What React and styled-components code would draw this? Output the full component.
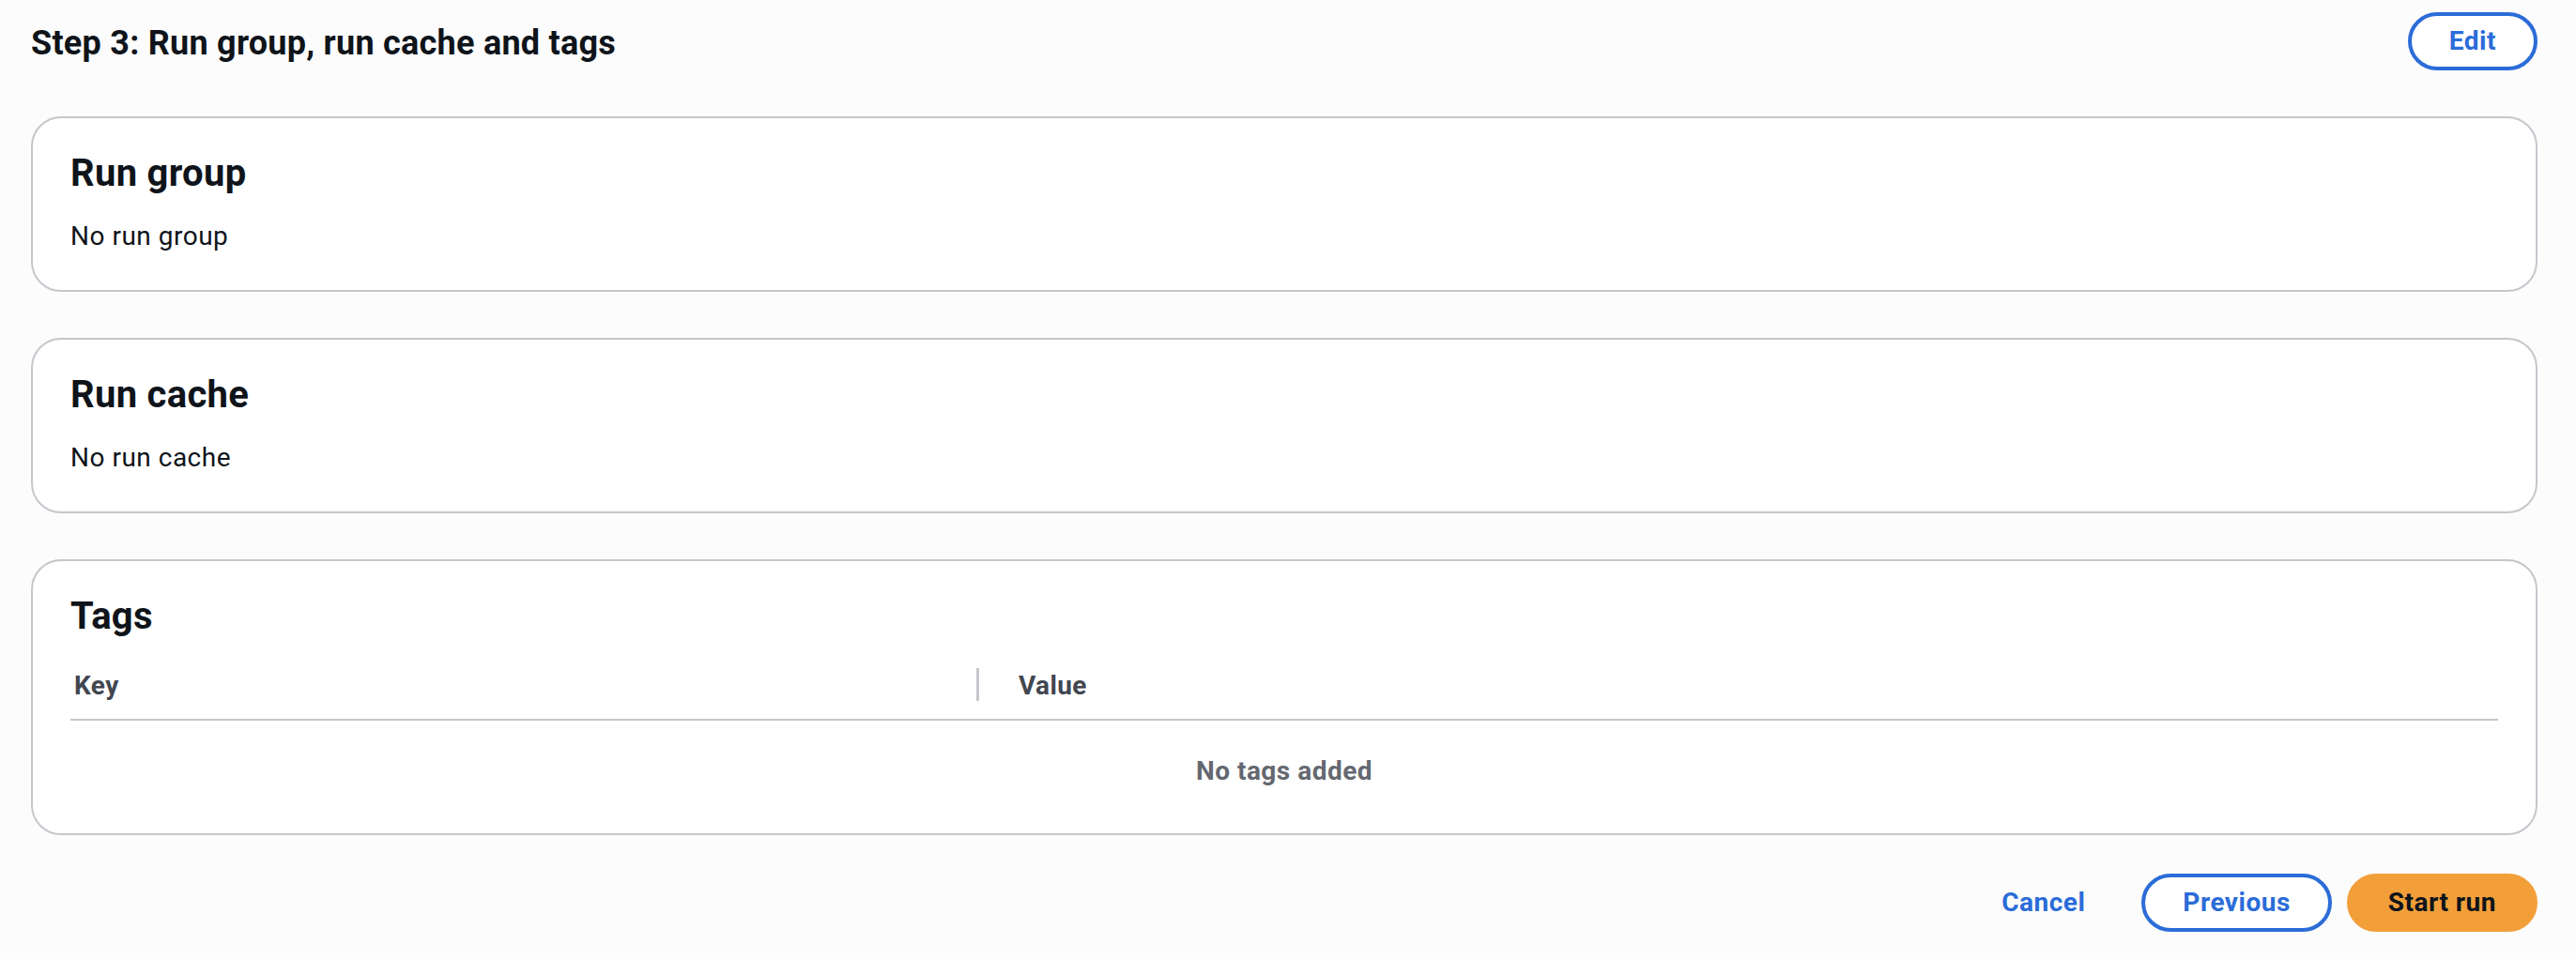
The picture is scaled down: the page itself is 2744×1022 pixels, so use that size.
import React from 'react';
import styled, { createGlobalStyle } from 'styled-components';

const GlobalStyle = createGlobalStyle`
  html, body {
    margin: 0;
    padding: 0;
    background-color: #fcfcfc;
  }

  body {
    font-family: Roboto, "Liberation Sans", sans-serif;
    color: #0f141a;
  }

  * {
    box-sizing: border-box;
  }
`;

const Page = styled.div`
  min-height: 1022px;
  padding: 13px 41px 0 33px;
  display: flex;
  flex-direction: column;
  gap: 49px;
`;

const StepHeader = styled.div`
  display: flex;
  justify-content: space-between;
  align-items: center;
  height: 62px;
`;

const StepTitle = styled.h2`
  margin: 0;
  padding-top: 4px;
  font-size: 36px;
  line-height: 44px;
  font-weight: 700;
  letter-spacing: 0.25px;
  color: #0f141a;
`;

const Button = styled.button`
  height: 62px;
  padding: 0 40px;
  border-radius: 40px;
  border: 4px solid ${(p) => (p.$variant === 'primary' ? '#f29f3a' : p.$variant === 'link' ? 'transparent' : '#2b6cd8')};
  background-color: ${(p) => (p.$variant === 'primary' ? '#f29f3a' : p.$variant === 'link' ? 'transparent' : '#ffffff')};
  color: ${(p) => (p.$variant === 'primary' ? '#0f141a' : '#2b6cd8')};
  font-family: Roboto, "Liberation Sans", sans-serif;
  font-size: 28px;
  font-weight: 700;
  letter-spacing: 0.5px;
  line-height: 40px;
  cursor: pointer;
`;

const Sections = styled.div`
  display: flex;
  flex-direction: column;
  gap: 49px;
`;

const Container = styled.section`
  background-color: #ffffff;
  border: 2px solid #c6c6cd;
  border-radius: 32px;
  padding: 35px 40px ${(p) => p.$bottom || 37}px;
`;

const ContainerTitle = styled.h3`
  margin: 0;
  font-size: 40px;
  line-height: 48px;
  font-weight: 700;
  letter-spacing: 0.3px;
  color: #0f141a;
`;

const BodyText = styled.p`
  margin: 23px 0 0;
  font-size: 28px;
  line-height: 40px;
  letter-spacing: 0.5px;
  color: #0f141a;
`;

const Table = styled.div`
  margin-top: 15px;
`;

const HeaderRow = styled.div`
  display: grid;
  grid-template-columns: 965px 1fr;
  border-bottom: 2px solid #c6c6cd;
  padding: 15px 0 15px;
`;

const HeaderCell = styled.div`
  position: relative;
  padding-left: ${(p) => (p.$divider ? 45 : 4)}px;
  font-size: 28px;
  line-height: 40px;
  font-weight: 700;
  letter-spacing: 0.4px;
  color: #424650;

  ${(p) =>
    p.$divider &&
    `
    &::before {
      content: '';
      position: absolute;
      left: 0;
      top: 1px;
      width: 3px;
      height: 35px;
      background-color: #c6c6cd;
    }
  `}
`;

const EmptyRow = styled.div`
  padding-top: 34px;
  text-align: center;
  font-size: 28px;
  line-height: 40px;
  font-weight: 700;
  letter-spacing: 0.5px;
  color: #656871;
`;

const Actions = styled.div`
  display: flex;
  justify-content: flex-end;
  gap: 16px;
  margin-top: -8px;
`;

const App = () => {
  return (
    <>
      <GlobalStyle />
      <Page>
        <StepHeader>
          <StepTitle>Step 3: Run group, run cache and tags</StepTitle>
          <Button>Edit</Button>
        </StepHeader>
        <Sections>
          <Container>
            <ContainerTitle>Run group</ContainerTitle>
            <BodyText>No run group</BodyText>
          </Container>
          <Container>
            <ContainerTitle>Run cache</ContainerTitle>
            <BodyText>No run cache</BodyText>
          </Container>
          <Container $bottom={46}>
            <ContainerTitle>Tags</ContainerTitle>
            <Table>
              <HeaderRow>
                <HeaderCell>Key</HeaderCell>
                <HeaderCell $divider>Value</HeaderCell>
              </HeaderRow>
              <EmptyRow>No tags added</EmptyRow>
            </Table>
          </Container>
        </Sections>
        <Actions>
          <Button $variant="link">Cancel</Button>
          <Button>Previous</Button>
          <Button $variant="primary">Start run</Button>
        </Actions>
      </Page>
    </>
  );
};

export default App;
